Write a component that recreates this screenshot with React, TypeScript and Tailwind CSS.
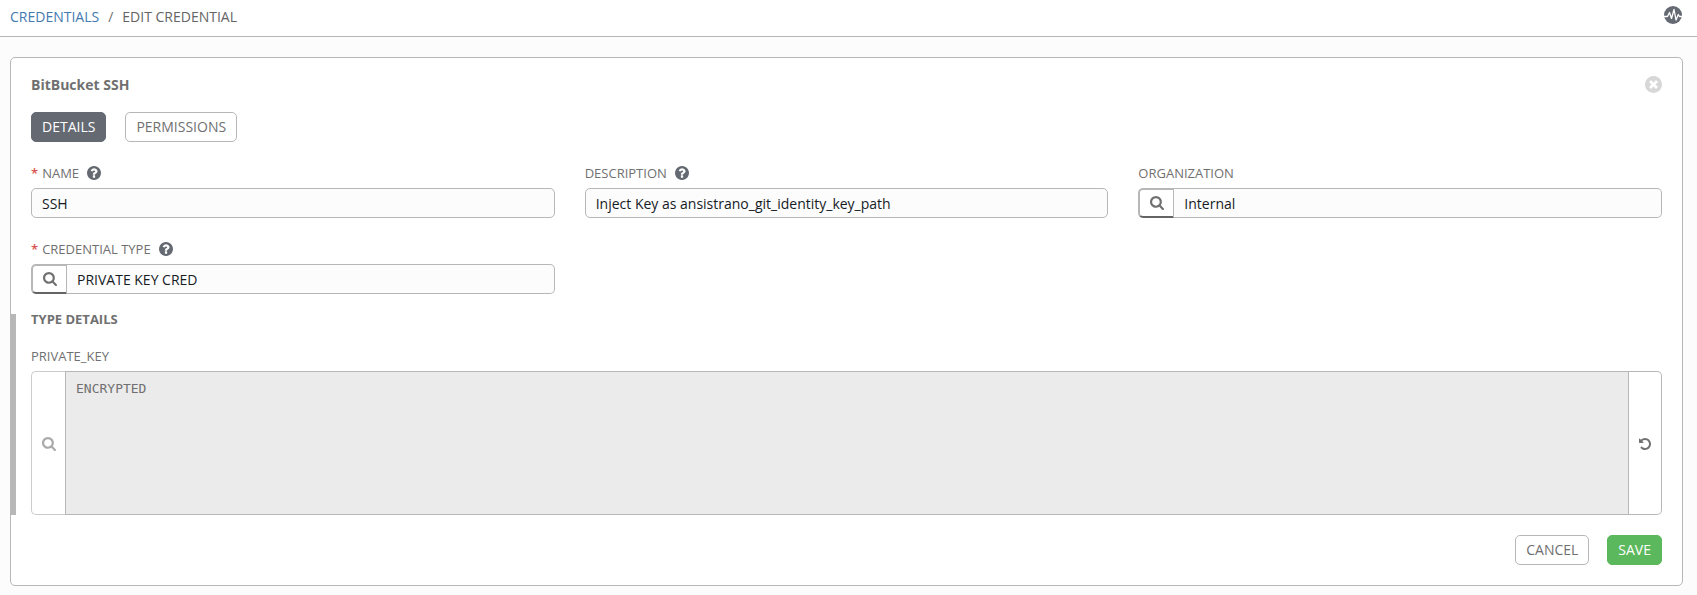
import { useState, type ReactNode } from 'react';

type IconProps = { className?: string };

function SearchIcon({ className }: IconProps) {
  return (
    <svg viewBox="64 128 1664 1664" fill="currentColor" aria-hidden="true" className={className}>
      <path d="M1152 832q0-185-131.5-316.5t-316.5-131.5-316.5 131.5-131.5 316.5 131.5 316.5 316.5 131.5 316.5-131.5 131.5-316.5zm512 832q0 52-38 90t-90 38q-54 0-90-38l-343-342q-179 124-399 124-143 0-273.5-55.5t-225-150-150-225-55.5-273.5 55.5-273.5 150-225 225-150 273.5-55.5 273.5 55.5 225 150 150 225 55.5 273.5q0 220-124 399l343 343q37 37 37 90z" transform="translate(64 0)" />
    </svg>
  );
}

function UndoIcon({ className }: IconProps) {
  return (
    <svg viewBox="128 128 1536 1536" fill="currentColor" aria-hidden="true" className={className}>
      <path d="M1664 896q0 156-61 298t-164 245-245 164-298 61q-172 0-327-72.5t-264-204.5q-7-10-6.5-22.5t8.5-20.5l137-138q10-9 25-9 16 2 23 12 73 95 179 147t225 52q104 0 198.5-40.5t163.5-109.5 109.5-163.5 40.5-198.5-40.5-198.5-109.5-163.5-163.5-109.5-198.5-40.5q-98 0-188 35.5t-160 101.5l137 138q31 30 14 69-17 40-59 40h-448q-26 0-45-19t-19-45v-448q0-42 40-59 39-17 69 14l130 129q107-101 244.5-156.5t284.5-55.5q156 0 298 61t245 164 164 245 61 298z" />
    </svg>
  );
}

function QuestionIcon({ className }: IconProps) {
  return (
    <svg viewBox="128 128 1536 1536" fill="currentColor" aria-hidden="true" className={className}>
      <path d="M1024 1376v-192q0-14-9-23t-23-9h-192q-14 0-23 9t-9 23v192q0 14 9 23t23 9h192q14 0 23-9t9-23zm256-672q0-88-55.5-163t-138.5-116-170-41q-243 0-371 213-15 24 8 42l132 100q7 6 19 6 16 0 25-12 53-68 86-92 34-24 86-24 48 0 85.5 26t37.5 59q0 38-20 61t-68 45q-63 28-115.5 86.5t-52.5 125.5v36q0 14 9 23t23 9h192q14 0 23-9t9-23q0-19 21.5-49.5t54.5-49.5q32-18 49-28.5t46-35 44.5-48 28-60.5 12.5-81zm384 192q0 209-103 385.5t-279.5 279.5-385.5 103-385.5-103-279.5-279.5-103-385.5 103-385.5 279.5-279.5 385.5-103 385.5 103 279.5 279.5 103 385.5z" />
    </svg>
  );
}

function CloseIcon({ className }: IconProps) {
  return (
    <svg viewBox="128 128 1536 1536" fill="currentColor" aria-hidden="true" className={className}>
      <path d="M1277 1122q0-26-19-45l-181-181 181-181q19-19 19-45 0-27-19-46l-90-90q-19-19-46-19-26 0-45 19l-181 181-181-181q-19-19-45-19-27 0-46 19l-90 90q-19 19-19 46 0 26 19 45l181 181-181 181q-19 19-19 45 0 27 19 46l90 90q19 19 46 19 26 0 45-19l181-181 181 181q19 19 45 19 27 0 46-19l90-90q19-19 19-46zm387-226q0 209-103 385.5t-279.5 279.5-385.5 103-385.5-103-279.5-279.5-103-385.5 103-385.5 279.5-279.5 385.5-103 385.5 103 279.5 279.5 103 385.5z" />
    </svg>
  );
}

function ActivityIcon({ className }: IconProps) {
  return (
    <svg viewBox="0 0 18 18" aria-hidden="true" className={className}>
      <circle cx="9" cy="9" r="9" fill="#646972" />
      <path
        d="M0 10.500H3.500L5.500 6.500L7.500 12.500L10 3.500L12 14L14.300 8.500L15.500 10.500H18"
        fill="none"
        stroke="#fff"
        strokeWidth="1.3"
        strokeLinejoin="round"
      />
    </svg>
  );
}

type LabelProps = { htmlFor: string; required?: boolean; help?: boolean; children: ReactNode };

function FieldLabel({ htmlFor, required, help, children }: LabelProps) {
  return (
    <div className="mb-1 flex h-[22px] items-center text-[13px]">
      <label htmlFor={htmlFor}>
        {required && <span className="mr-1 font-semibold text-[#d9534f]">*</span>}
        {children}
      </label>
      {help && (
        <button type="button" aria-label="Help" className="ml-2 text-[#646972]">
          <QuestionIcon className="size-3.5" />
        </button>
      )}
    </div>
  );
}

type FieldProps = {
  id: string;
  label: string;
  defaultValue: string;
  required?: boolean;
  help?: boolean;
  lookup?: boolean;
};

function Field({ id, label, defaultValue, required, help, lookup }: FieldProps) {
  return (
    <div>
      <FieldLabel htmlFor={id} required={required} help={help}>
        {label}
      </FieldLabel>
      <div className="flex h-[30px]">
        {lookup && (
          <button
            type="button"
            aria-label={`Look up ${label.toLowerCase()}`}
            className="flex w-9 shrink-0 items-center justify-center rounded-l-[5px] border-2 border-r border-[#b7b7b7] border-b-[#646464] bg-white"
          >
            <SearchIcon className="size-3.5" />
          </button>
        )}
        <input
          id={id}
          type="text"
          defaultValue={defaultValue}
          className={`min-w-0 flex-1 border border-[#b7b7b7] bg-[#fcfcfc] px-2.5 pt-0.5 text-sm text-[#161b1f] ${
            lookup ? 'rounded-r-[5px] border-l-0' : 'rounded-[5px]'
          }`}
        />
      </div>
    </div>
  );
}

const tabs = ['DETAILS', 'PERMISSIONS'];

export default function App() {
  const [tab, setTab] = useState('DETAILS');

  return (
    <div className="min-h-screen bg-[#fcfcfc] font-['Open_Sans',sans-serif] text-sm text-[#707070]">
      <header className="flex h-[37px] items-center justify-between border-b border-[#b7b7b7] bg-white pr-[15px] pb-0.5 pl-2.5">
        <nav aria-label="Breadcrumb" className="flex">
          <a href="#credentials" className="text-[#447ab0]">
            CREDENTIALS
          </a>
          <span className="px-[9px]">/</span>
          <span className="text-[#646464]">EDIT CREDENTIAL</span>
        </nav>
        <button type="button" aria-label="Activity stream" className="pb-1">
          <ActivityIcon className="size-[18px]" />
        </button>
      </header>

      <main className="pt-5 pr-3.5 pb-2 pl-2.5">
        <form
          onSubmit={(e) => e.preventDefault()}
          className="rounded-[5px] border border-[#b7b7b7] bg-white py-5"
        >
          <div className="px-5">
            <div className="flex h-3.5 items-center justify-between">
              <h1 className="font-bold">BitBucket SSH</h1>
              <button type="button" aria-label="Close" className="pb-0.5 text-[#d7d7d7]">
                <CloseIcon className="size-[17px]" />
              </button>
            </div>

            <div className="mt-5 flex gap-[19px]">
              {tabs.map((name) => (
                <button
                  key={name}
                  type="button"
                  onClick={() => setTab(name)}
                  className={`h-[30px] rounded-[5px] border px-2.5 ${
                    tab === name ? 'border-[#646972] bg-[#646972] text-white' : 'border-[#b7b7b7] bg-white'
                  }`}
                >
                  {name}
                </button>
              ))}
            </div>

            <div className="mt-5 grid grid-cols-3 gap-x-[30px] gap-y-5">
              <Field id="name" label="NAME" defaultValue="SSH" required help />
              <Field
                id="description"
                label="DESCRIPTION"
                defaultValue="Inject Key as ansistrano_git_identity_key_path"
                help
              />
              <Field id="organization" label="ORGANIZATION" defaultValue="Internal" lookup />
              <Field id="type" label="CREDENTIAL TYPE" defaultValue="PRIVATE KEY CRED" required help lookup />
            </div>
          </div>

          <section className="mt-5 -ml-px border-l-6 border-[#b7b7b7] pr-5 pl-[15px]">
            <h2 className="mb-[21px] text-[13px] leading-[10px] font-bold">TYPE DETAILS</h2>
            <FieldLabel htmlFor="private-key">PRIVATE_KEY</FieldLabel>
            <div className="flex h-36">
              <button
                type="button"
                disabled
                aria-label="Look up private key"
                className="flex w-[34px] items-center justify-center rounded-l-[5px] border border-r-0 border-[#cccccc] pt-0.5 text-[#a9a9a9]"
              >
                <SearchIcon className="size-3.5" />
              </button>
              <textarea
                id="private-key"
                disabled
                defaultValue="ENCRYPTED"
                className="flex-1 resize-none border border-[#b7b7b7] bg-[#ebebeb] px-2.5 py-[7px] font-['DejaVu_Sans_Mono',monospace] text-[13px] leading-5"
              />
              <button
                type="button"
                aria-label="Replace private key"
                className="flex w-[33px] items-center justify-center rounded-r-[5px] border border-l-0 border-[#b7b7b7] pt-0.5"
              >
                <UndoIcon className="size-3" />
              </button>
            </div>
          </section>

          <div className="mt-5 flex justify-end gap-[18px] px-5">
            <button type="button" className="h-[30px] rounded-[5px] border border-[#b7b7b7] bg-white px-2.5">
              CANCEL
            </button>
            <button type="submit" className="h-[30px] rounded-[5px] border border-[#5cb85c] bg-[#5cb85c] px-2.5 text-white">
              SAVE
            </button>
          </div>
        </form>
      </main>
    </div>
  );
}
